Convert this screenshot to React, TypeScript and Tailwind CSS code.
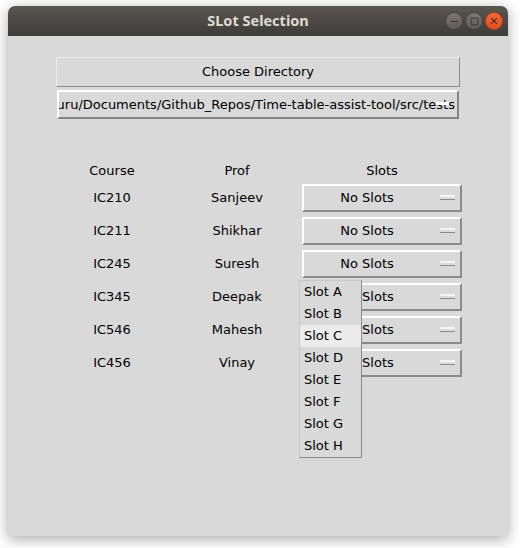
import { Minus, Square, X } from 'lucide-react';

const ROWS = [
  { course: 'IC210', prof: 'Sanjeev' },
  { course: 'IC211', prof: 'Shikhar' },
  { course: 'IC245', prof: 'Suresh' },
  { course: 'IC345', prof: 'Deepak' },
  { course: 'IC546', prof: 'Mahesh' },
  { course: 'IC456', prof: 'Vinay' },
];

const SLOTS = ['Slot A', 'Slot B', 'Slot C', 'Slot D', 'Slot E', 'Slot F', 'Slot G', 'Slot H'];

function OptionMenu() {
  return (
    <div className="flex h-[28px] w-[160px] items-center border-2 border-t-white border-l-white border-r-[#8a8a8a] border-b-[#8a8a8a] bg-[#d9d9d9]">
      <span className="flex-1 text-center">No Slots</span>
      <span className="mr-[5px] ml-[10px] h-[5px] w-[15px] border-t-2 border-t-[#f4f4f4] border-b border-b-[#8a8a8a] bg-[#dcdcdc]" />
    </div>
  );
}

export default function App() {
  return (
    <div className="h-[548px] w-[522px] overflow-hidden bg-white pt-[6px] pl-[8px] text-[13px] text-black" style={{ fontFamily: '"DejaVu Sans", sans-serif' }}>
      <div className="flex h-[530px] w-[500px] flex-col rounded-t-[7px] shadow-[0_3px_14px_rgba(0,0,0,0.35)]">
        {/* title bar */}
        <div className="relative flex h-[30px] items-center justify-center rounded-t-[7px] bg-gradient-to-b from-[#5a5751] to-[#3e3c38]">
          <span className="text-[14.5px] font-bold text-[#dfdbd2]" style={{ fontFamily: '"Noto Sans", "DejaVu Sans", sans-serif' }}>SLot Selection</span>
          <div className="absolute top-[6px] right-[5px] flex gap-[2px]">
            <span className="flex h-[18px] w-[18px] items-center justify-center rounded-full border border-[#45433f] bg-gradient-to-b from-[#7a7771] to-[#5f5c57]">
              <Minus size={11} strokeWidth={2} color="#2f2e2b" />
            </span>
            <span className="flex h-[18px] w-[18px] items-center justify-center rounded-full border border-[#45433f] bg-gradient-to-b from-[#7a7771] to-[#5f5c57]">
              <Square size={9} strokeWidth={2} color="#2f2e2b" />
            </span>
            <span className="flex h-[18px] w-[18px] items-center justify-center rounded-full border border-[#b8421a] bg-gradient-to-b from-[#f0683a] to-[#e0501e]">
              <X size={10} strokeWidth={2.5} color="#3a1a10" />
            </span>
          </div>
        </div>

        {/* body */}
        <div className="relative flex-1 bg-[#d9d9d9]">
          <div className="ml-[48px] flex w-[404px] flex-col pt-[21px]">
            <div className="flex h-[30px] items-center justify-center border border-t-[#ececec] border-l-[#ececec] border-r-[#8c8c8c] border-b-[#8c8c8c]">
              Choose Directory
            </div>
            <div className="relative mt-[3px] ml-[1px] flex h-[29px] w-[402px] items-center justify-end overflow-hidden border-2 border-t-white border-l-white border-r-[#858585] border-b-[#858585] pr-[2px] whitespace-nowrap">
              <span>/home/guru/Documents/Github_Repos/Time-table-assist-tool/src/tests</span>
              <span className="absolute top-[10px] right-[8px] h-[3px] w-[13px] bg-white" />
            </div>
          </div>

          {/* table */}
          <div className="mt-[41px] ml-[48px] flex flex-col">
            <div className="flex h-[21px] items-center">
              <span className="w-[112px] text-center">Course</span>
              <span className="w-[134px] pl-[4px] text-center">Prof</span>
              <span className="w-[160px] text-center">Slots</span>
            </div>
            {ROWS.map(r => (
              <div key={r.course} className="flex h-[33px] items-center">
                <span className="w-[112px] text-center">{r.course}</span>
                <span className="w-[134px] pl-[4px] text-center">{r.prof}</span>
                <OptionMenu />
              </div>
            ))}
          </div>

          {/* open dropdown */}
          <div className="absolute top-[244px] left-[291px] flex w-[63px] flex-col border border-t-[#c8c8c8] border-l-[#c8c8c8] border-r-[#8a8a8a] border-b-[#8a8a8a] bg-[#d9d9d9]">
            {SLOTS.map(s => (
              <div key={s} className={s === 'Slot C' ? 'flex h-[22px] items-center bg-[#ececec] pl-[4px]' : 'flex h-[22px] items-center pl-[4px]'}>
                {s}
              </div>
            ))}
          </div>
        </div>
      </div>
    </div>
  );
}
